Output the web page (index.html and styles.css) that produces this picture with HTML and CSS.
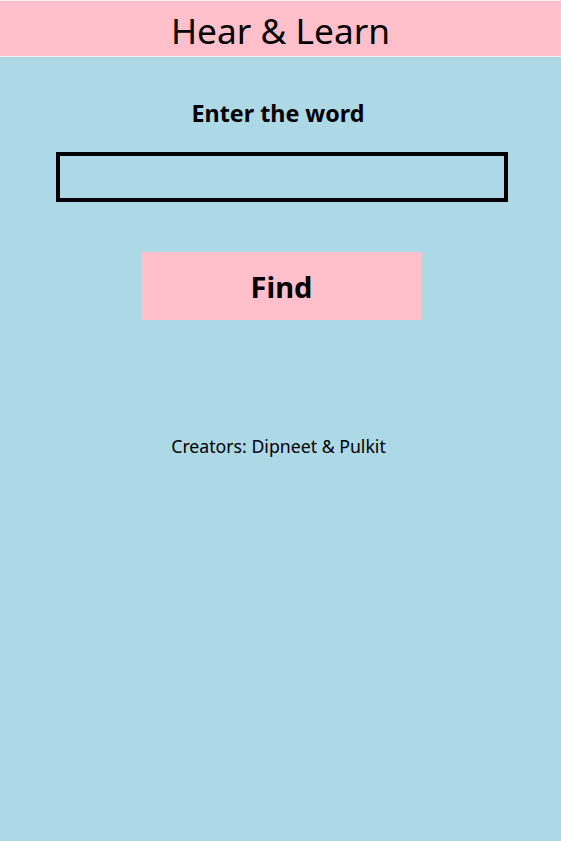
FILE: index.html
```html
<!DOCTYPE html>
<html>
<head>
<meta charset="utf-8">
<link rel="stylesheet" href="styles.css">
</head>
<body>
<header class="top">Hear &amp; Learn</header>
<main class="content">
  <h2 class="label">Enter the word</h2>
  <input class="word" type="text">
  <button class="find">Find</button>
  <p class="credits">Creators: Dipneet &amp; Pulkit</p>
</main>
</body>
</html>
```
FILE: styles.css
```css
html, body {
  margin: 0;
  padding: 0;
  background: #add8e6;
  font-family: "Noto Sans", "Open Sans", sans-serif;
  min-height: 100%;
}
body {
  border-top: 1px solid #f0f0f0;
}
.top {
  background: #ffc0cb;
  height: 56px;
  box-sizing: border-box;
  padding-top: 3px;
  border-bottom: 1px solid #f0f0f0;
  text-align: center;
  font-size: 35.3px;
  line-height: 52px;
  color: #000;
}
.content {
  display: flex;
  flex-direction: column;
  align-items: center;
}
.label {
  margin: 38px 5px 0 0;
  font-size: 23.3px;
  font-weight: bold;
  line-height: 36px;
}
.word {
  margin: 21px 0 0 2px;
  width: 452px;
  height: 50px;
  box-sizing: border-box;
  border: 4px solid #000;
  background: transparent;
  outline: none;
}
.find {
  margin: 50px 0 0 2px;
  width: 281px;
  height: 68px;
  border: none;
  background: #ffc0cb;
  font-family: inherit;
  font-size: 29px;
  font-weight: bold;
  color: #000;
}
.credits {
  margin: 112px 4px 0 0;
  font-size: 17.7px;
  line-height: 28px;
}
```
